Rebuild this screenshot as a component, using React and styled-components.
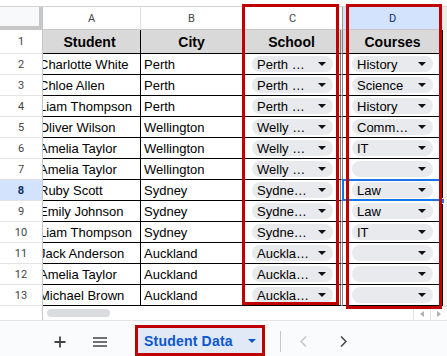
import React from 'react';
import styled, { createGlobalStyle } from 'styled-components';

const Global = createGlobalStyle`
  *, *::before, *::after { box-sizing: border-box; }
  html, body { margin: 0; padding: 0; background: #fff; }
  body { font-family: "Liberation Sans", Arial, sans-serif; }
  #root { width: 447px; height: 356px; overflow: hidden; }
`;

const Page = styled.div`
  position: relative;
  width: 447px;
  height: 356px;
  overflow: hidden;
  display: flex;
  flex-direction: column;
  background: #fff;
`;

const TopStrip = styled.div`
  flex: none;
  height: 7px;
  border-bottom: 1px solid #d3d3d3;
`;

const Sheet = styled.div`
  flex: none;
  display: grid;
  grid-template-columns: 43px 98px 102px 100px 100px 4px;
  grid-template-rows: 23px 24px repeat(12, 21px);
`;

const Corner = styled.div`
  background: #f8f9fa;
  border-right: 4px solid #c7c7c7;
  border-bottom: 4px solid #c7c7c7;
`;

const ColHeader = styled.div`
  display: flex;
  align-items: center;
  justify-content: center;
  font-family: Roboto, "Liberation Sans", Arial, sans-serif;
  font-size: 11px;
  color: ${p => (p.$active ? '#0b2f6b' : '#444')};
  background: ${p => (p.$active ? '#d3e3fd' : '#fff')};
  border-right: 1px solid ${p => (p.$divider ? '#9a9a9a' : '#e1e1e1')};
  border-bottom: 1px solid #c7c7c7;
`;

const RowHeader = styled.div`
  display: flex;
  align-items: center;
  justify-content: center;
  font-family: Roboto, "Liberation Sans", Arial, sans-serif;
  font-size: 11px;
  font-weight: ${p => (p.$active ? 700 : 400)};
  color: ${p => (p.$active ? '#0b2f6b' : '#444')};
  background: ${p => (p.$active ? '#d3e3fd' : '#fff')};
  border-right: 1px solid #c7c7c7;
  border-bottom: 1px solid #e3e3e3;
`;

const HeadCell = styled.div`
  display: flex;
  align-items: center;
  justify-content: center;
  background: #d9d9d9;
  font-weight: 700;
  font-size: 14px;
  color: #000;
  white-space: nowrap;
  overflow: hidden;
  text-indent: ${p => (p.$clipped ? '-4px' : '0')};
  border-right: ${p => (p.$divider ? '3px double #808080' : '1px solid #000')};
  border-bottom: 1px solid #000;
`;

const Cell = styled.div`
  position: relative;
  display: flex;
  align-items: center;
  padding-left: ${p => (p.$chip ? '9px' : p.$clipped ? '0' : '3px')};
  font-size: 13px;
  color: #000;
  white-space: nowrap;
  overflow: ${p => (p.$chip ? 'visible' : 'hidden')};
  border-right: ${p => (p.$divider ? '3px double #808080' : '1px solid #000')};
  border-bottom: 1px solid #000;
  ${p =>
    p.$selected &&
    `
    &::after {
      content: '';
      position: absolute;
      top: -1px; left: -1px; right: 0; bottom: -1px;
      border: 2px solid #1a73e8;
      z-index: 1;
    }
    &::before {
      content: '';
      position: absolute;
      right: -3px; bottom: -4px;
      width: 6px; height: 6px;
      background: #1a73e8;
      border: 1px solid #fff;
      z-index: 2;
    }
  `}
`;

const CellText = styled.span`
  margin-left: ${p => (p.$clipped ? '-4px' : '0')};
`;

const Filler = styled.div`
  background: ${p => (p.$head ? '#ececec' : '#f3f3f3')};
`;

const Chip = styled.div`
  display: flex;
  align-items: center;
  justify-content: space-between;
  width: 81px;
  height: 16px;
  border-radius: 8px;
  background: #e8eaed;
  padding: 0 7px 0 5px;
  font-size: 13px;
  color: #000;
`;

const ChipLabel = styled.span`
  white-space: nowrap;
`;

const Caret = ({ color = '#111' }) => (
  <svg width="8" height="4" viewBox="0 0 8 4" aria-hidden="true">
    <path d="M0 0 H8 L4 4 Z" fill={color} />
  </svg>
);

const Highlight = styled.div`
  position: absolute;
  left: ${p => p.$x}px;
  top: ${p => p.$y}px;
  width: ${p => p.$w}px;
  height: ${p => p.$h}px;
  border: 3px solid #c00000;
  pointer-events: none;
  z-index: 5;
`;

const ScrollZone = styled.div`
  flex: none;
  height: 14px;
  display: flex;
  align-items: stretch;
`;

const ScrollGutter = styled.div`
  width: 43px;
  border-right: 1px solid #c7c7c7;
`;

const ScrollTrack = styled.div`
  flex: 1;
  display: flex;
  align-items: center;
  padding-left: 4px;
`;

const Thumb = styled.div`
  width: 63px;
  height: 8px;
  border-radius: 4px;
  background: #dadce0;
`;

const ScrollArrows = styled.div`
  display: flex;
  border-top: 1px solid #e3e3e3;
`;

const ScrollArrow = styled.div`
  width: 17px;
  display: flex;
  align-items: center;
  justify-content: center;
  border-left: 1px solid #e3e3e3;
`;

const BottomBar = styled.div`
  flex: 1;
  display: flex;
  align-items: stretch;
  padding: 4px 0 0 46px;
  background: #f9fbfd;
  border-top: 1px solid #e3e3e3;
`;

const IconButton = styled.div`
  width: 28px;
  display: flex;
  align-items: center;
  justify-content: center;
  margin-left: ${p => p.$gap || 0}px;
  padding-top: 2px;
`;

const Tab = styled.div`
  margin-left: 21px;
  width: 130px;
  display: flex;
  align-items: center;
  justify-content: space-between;
  padding: 0 6px 0 6px;
  background: #e1e9f7;
  border: 3px solid #c00000;
  color: #0b57d0;
  font-weight: 700;
  font-size: 14px;
  letter-spacing: 0.2px;
`;

const Divider = styled.div`
  width: 1px;
  margin: 6px 0 4px 15px;
  background: #c4c7c5;
`;

const rows = [
  ['Charlotte White', 'Perth', 'Perth …', 'History'],
  ['Chloe Allen', 'Perth', 'Perth …', 'Science'],
  ['Liam Thompson', 'Perth', 'Perth …', 'History'],
  ['Oliver Wilson', 'Wellington', 'Welly …', 'Comm…'],
  ['Amelia Taylor', 'Wellington', 'Welly …', 'IT'],
  ['Amelia Taylor', 'Wellington', 'Welly …', ''],
  ['Ruby Scott', 'Sydney', 'Sydne…', 'Law'],
  ['Emily Johnson', 'Sydney', 'Sydne…', 'Law'],
  ['Liam Thompson', 'Sydney', 'Sydne…', 'IT'],
  ['Jack Anderson', 'Auckland', 'Auckla…', ''],
  ['Amelia Taylor', 'Auckland', 'Auckla…', ''],
  ['Michael Brown', 'Auckland', 'Auckla…', ''],
];

const SELECTED_ROW = 8;

export default function App() {
  return (
    <Page>
      <Global />
      <TopStrip />
      <Sheet>
        <Corner />
        <ColHeader>A</ColHeader>
        <ColHeader>B</ColHeader>
        <ColHeader $divider>C</ColHeader>
        <ColHeader $active>D</ColHeader>
        <Filler $head />

        <RowHeader>1</RowHeader>
        <HeadCell $clipped>Student</HeadCell>
        <HeadCell>City</HeadCell>
        <HeadCell $divider>School</HeadCell>
        <HeadCell>Courses</HeadCell>
        <Filler />

        {rows.map((r, i) => {
          const n = i + 2;
          const sel = n === SELECTED_ROW;
          return (
            <React.Fragment key={n}>
              <RowHeader $active={sel}>{n}</RowHeader>
              <Cell $clipped>
                <CellText $clipped>{r[0]}</CellText>
              </Cell>
              <Cell>
                <CellText>{r[1]}</CellText>
              </Cell>
              <Cell $chip $divider>
                <Chip>
                  <ChipLabel>{r[2]}</ChipLabel>
                  <Caret />
                </Chip>
              </Cell>
              <Cell $chip $selected={sel}>
                <Chip>
                  <ChipLabel>{r[3]}</ChipLabel>
                  <Caret />
                </Chip>
              </Cell>
              <Filler />
            </React.Fragment>
          );
        })}
      </Sheet>

      <ScrollZone>
        <ScrollGutter />
        <ScrollTrack>
          <Thumb />
        </ScrollTrack>
        <ScrollArrows>
          <ScrollArrow>
            <svg width="4" height="6" viewBox="0 0 4 6" aria-hidden="true">
              <path d="M4 0 V6 L0 3 Z" fill="#b0b0b0" />
            </svg>
          </ScrollArrow>
          <ScrollArrow>
            <svg width="4" height="6" viewBox="0 0 4 6" aria-hidden="true">
              <path d="M0 0 V6 L4 3 Z" fill="#b0b0b0" />
            </svg>
          </ScrollArrow>
        </ScrollArrows>
      </ScrollZone>

      <BottomBar>
        <IconButton>
          <svg width="12" height="12" viewBox="0 0 12 12" aria-hidden="true">
            <path d="M6 0.5 V11.5 M0.5 6 H11.5" stroke="#444" strokeWidth="1.8" fill="none" />
          </svg>
        </IconButton>
        <IconButton $gap={12}>
          <svg width="14" height="10" viewBox="0 0 14 10" aria-hidden="true">
            <path d="M0 1 H14 M0 5 H14 M0 9 H14" stroke="#444" strokeWidth="1.6" fill="none" />
          </svg>
        </IconButton>
        <Tab>
          <span>Student Data</span>
          <Caret color="#0b57d0" />
        </Tab>
        <Divider />
        <IconButton $gap={8}>
          <svg width="7" height="11" viewBox="0 0 7 11" aria-hidden="true">
            <path d="M6 0.5 L1 5.5 L6 10.5" stroke="#c4c7c5" strokeWidth="1.5" fill="none" />
          </svg>
        </IconButton>
        <IconButton $gap={12}>
          <svg width="7" height="11" viewBox="0 0 7 11" aria-hidden="true">
            <path d="M1 0.5 L6 5.5 L1 10.5" stroke="#444" strokeWidth="1.5" fill="none" />
          </svg>
        </IconButton>
      </BottomBar>

      <Highlight $x={242} $y={4} $w={97} $h={301} />
      <Highlight $x={346} $y={4} $w={96} $h={305} />
    </Page>
  );
}
